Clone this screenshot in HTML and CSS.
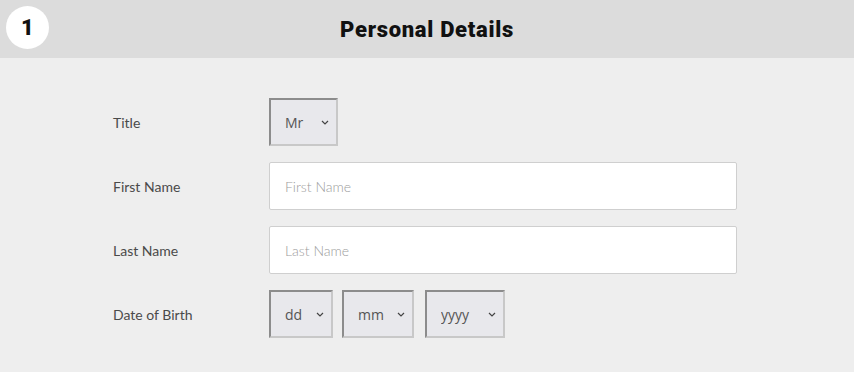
FILE: index.html
```html
<!DOCTYPE html>
<html lang="en">
<head>
  <meta charset="utf-8">
  <title>Personal Details</title>
  <link rel="stylesheet" href="styles.css">
</head>
<body>
  <div class="section-header">
    <div class="step-badge">1</div>
    <h2 class="section-title">Personal Details</h2>
  </div>

  <form class="details-form">
    <label class="field-label" for="title">Title</label>
    <div class="field">
      <div class="select-wrap select-title">
        <select id="title"><option>Mr</option><option>Mrs</option><option>Ms</option></select>
        <svg class="chevron" width="8" height="5" viewBox="0 0 8 5"><path d="M1 1l3 3 3-3" fill="none" stroke="#444" stroke-width="1.2"/></svg>
      </div>
    </div>

    <label class="field-label" for="first">First Name</label>
    <div class="field">
      <input id="first" class="text-input" type="text" placeholder="First Name">
    </div>

    <label class="field-label" for="last">Last Name</label>
    <div class="field">
      <input id="last" class="text-input" type="text" placeholder="Last Name">
    </div>

    <label class="field-label" for="dd">Date of Birth</label>
    <div class="field dob">
      <div class="select-wrap select-dd">
        <select id="dd"><option>dd</option></select>
        <svg class="chevron" width="8" height="5" viewBox="0 0 8 5"><path d="M1 1l3 3 3-3" fill="none" stroke="#444" stroke-width="1.2"/></svg>
      </div>
      <div class="select-wrap select-mm">
        <select><option>mm</option></select>
        <svg class="chevron" width="8" height="5" viewBox="0 0 8 5"><path d="M1 1l3 3 3-3" fill="none" stroke="#444" stroke-width="1.2"/></svg>
      </div>
      <div class="select-wrap select-yyyy">
        <select><option>yyyy</option></select>
        <svg class="chevron" width="8" height="5" viewBox="0 0 8 5"><path d="M1 1l3 3 3-3" fill="none" stroke="#444" stroke-width="1.2"/></svg>
      </div>
    </div>
  </form>
</body>
</html>
```

FILE: styles.css
```css
* {
  margin: 0;
  padding: 0;
  box-sizing: border-box;
}

body {
  font-family: 'Lato', 'Open Sans', sans-serif;
  background: #eeeeee;
  color: #444;
  min-height: 100vh;
}

.section-header {
  position: relative;
  height: 58px;
  background: #dcdcdc;
  display: flex;
  align-items: center;
  justify-content: center;
}

.step-badge {
  position: absolute;
  left: 6px;
  top: 6px;
  width: 43px;
  height: 43px;
  border-radius: 50%;
  background: #fff;
  display: flex;
  align-items: center;
  justify-content: center;
  font-family: 'Roboto', sans-serif;
  font-weight: 900;
  font-size: 22px;
  color: #111;
}

.section-title {
  font-family: 'Roboto', sans-serif;
  font-weight: 900;
  font-size: 22px;
  letter-spacing: 0.7px;
  color: #111;
  margin-left: 0;
}

.details-form {
  display: grid;
  grid-template-columns: 156px 468px;
  row-gap: 16px;
  padding: 40px 0 0 113px;
}

.field-label {
  display: flex;
  align-items: center;
  height: 48px;
  font-size: 14px;
  color: #4a4a4a;
}

.field {
  display: flex;
  gap: 9px;
}

.text-input {
  width: 468px;
  height: 48px;
  border: 1px solid #cfcfcf;
  border-radius: 2px;
  background: #fff;
  padding: 0 15px;
  font-family: 'Lato', sans-serif;
  font-size: 14px;
  color: #444;
  outline: none;
}

.text-input::placeholder {
  color: #9c9c9c;
  font-weight: 300;
}

.select-wrap {
  position: relative;
  height: 48px;
}

.select-wrap select {
  appearance: none;
  -webkit-appearance: none;
  width: 100%;
  height: 100%;
  background: #e8e8ec;
  border-style: solid;
  border-width: 2px;
  border-color: #8c8c8c #c8c8c8 #c8c8c8 #8c8c8c;
  padding: 0 0 0 14px;
  font-family: 'Open Sans', sans-serif;
  font-size: 14px;
  color: #555;
  outline: none;
}

.chevron {
  position: absolute;
  right: 9px;
  top: 22px;
  pointer-events: none;
}

.select-title { width: 69px; }
.select-dd { width: 64px; }
.select-mm { width: 72px; }
.select-yyyy { width: 80px; margin-left: 2px; }
```
